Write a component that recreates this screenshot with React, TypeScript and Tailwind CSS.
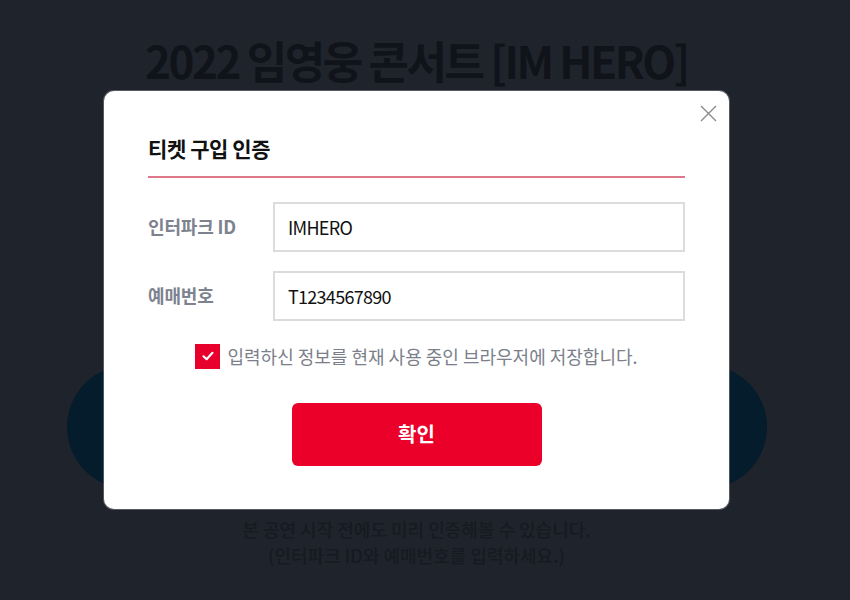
import React, { useState } from 'react';

const font = { fontFamily: '"Noto Sans CJK KR", "Noto Sans", sans-serif' };

const CloseIcon = () => (
	<svg width="17" height="17" viewBox="0 0 17 17" fill="none">
		<path d="M1 1L16 16M16 1L1 16" stroke="#8a8a8a" strokeWidth="1.4" />
	</svg>
);

const CheckIcon = () => (
	<svg width="14" height="14" viewBox="0 0 14 14" fill="none">
		<path d="M2.5 7.3L5.6 10.2L11.5 3.8" stroke="#fff" strokeWidth="2.2" strokeLinecap="round" strokeLinejoin="round" />
	</svg>
);

interface FieldRowProps {
	label: string;
	value: string;
}

const FieldRow = ({ label, value }: FieldRowProps) => {
	return (
		<div className="flex items-center">
			<label className="w-[125px] shrink-0 text-[18px] font-semibold tracking-[-0.01em] text-[#7d828f]">
				{label}
			</label>
			<input
				readOnly
				value={value}
				className="h-[50px] flex-1 border-2 border-[#dcdcdc] bg-white px-[13px] text-[18px] tracking-[-0.04em] text-[#111] outline-none"
				style={font}
			/>
		</div>
	);
};

export default function App() {
	const [saved, setSaved] = useState(true);

	return (
		<div className="relative h-[600px] w-[850px] overflow-hidden bg-[#1f232c]" style={font}>
			{/* page behind the dim */}
			<div className="flex w-[833px] flex-col items-center pt-[34px]">
				<h1 className="text-[44px] font-bold leading-[1.2] tracking-[-0.055em] text-[#10131a]">
					2022 임영웅 콘서트 [IM HERO]
				</h1>
				<div className="mt-[278px] h-[124px] w-[700px] rounded-full bg-[#041c2c]" />
				<p className="mt-[27px] text-center text-[18px] font-medium leading-[26px] text-[#161a21]">
					본 공연 시작 전에도 미리 인증해볼 수 있습니다.
					<br />
					(인터파크 ID와 예매번호를 입력하세요.)
				</p>
			</div>

			{/* modal */}
			<div className="absolute inset-0 flex items-center justify-center pr-[17px]">
				<div className="relative w-[625px] rounded-[10px] bg-white px-[44px] pb-[43px] pt-[42px] ring-1 ring-[#8d9096]/50">
					<button className="absolute right-[12px] top-[14px]" aria-label="닫기">
						<CloseIcon />
					</button>

					<h2 className="border-b-2 border-[#dd7888] pb-[11px] text-[21px] font-bold tracking-[-0.02em] text-[#111]">
						티켓 구입 인증
					</h2>

					<div className="mt-[24px] flex flex-col gap-[19px]">
						<FieldRow label="인터파크 ID" value="IMHERO" />
						<FieldRow label="예매번호" value="T1234567890" />
					</div>

					<label className="mt-[22px] flex cursor-pointer items-center justify-center gap-[7px]">
						<span
							className="flex h-[25px] w-[25px] items-center justify-center bg-[#e8002d]"
							onClick={() => setSaved(!saved)}
						>
							{saved && <CheckIcon />}
						</span>
						<span className="text-[18px] text-[#7b7f8a]">
							입력하신 정보를 현재 사용 중인 브라우저에 저장합니다.
						</span>
					</label>

					<div className="mt-[33px] flex justify-center">
						<button className="h-[63px] w-[250px] rounded-[6px] bg-[#ea0029] text-[20px] font-bold text-white">
							확인
						</button>
					</div>
				</div>
			</div>
		</div>
	);
}
